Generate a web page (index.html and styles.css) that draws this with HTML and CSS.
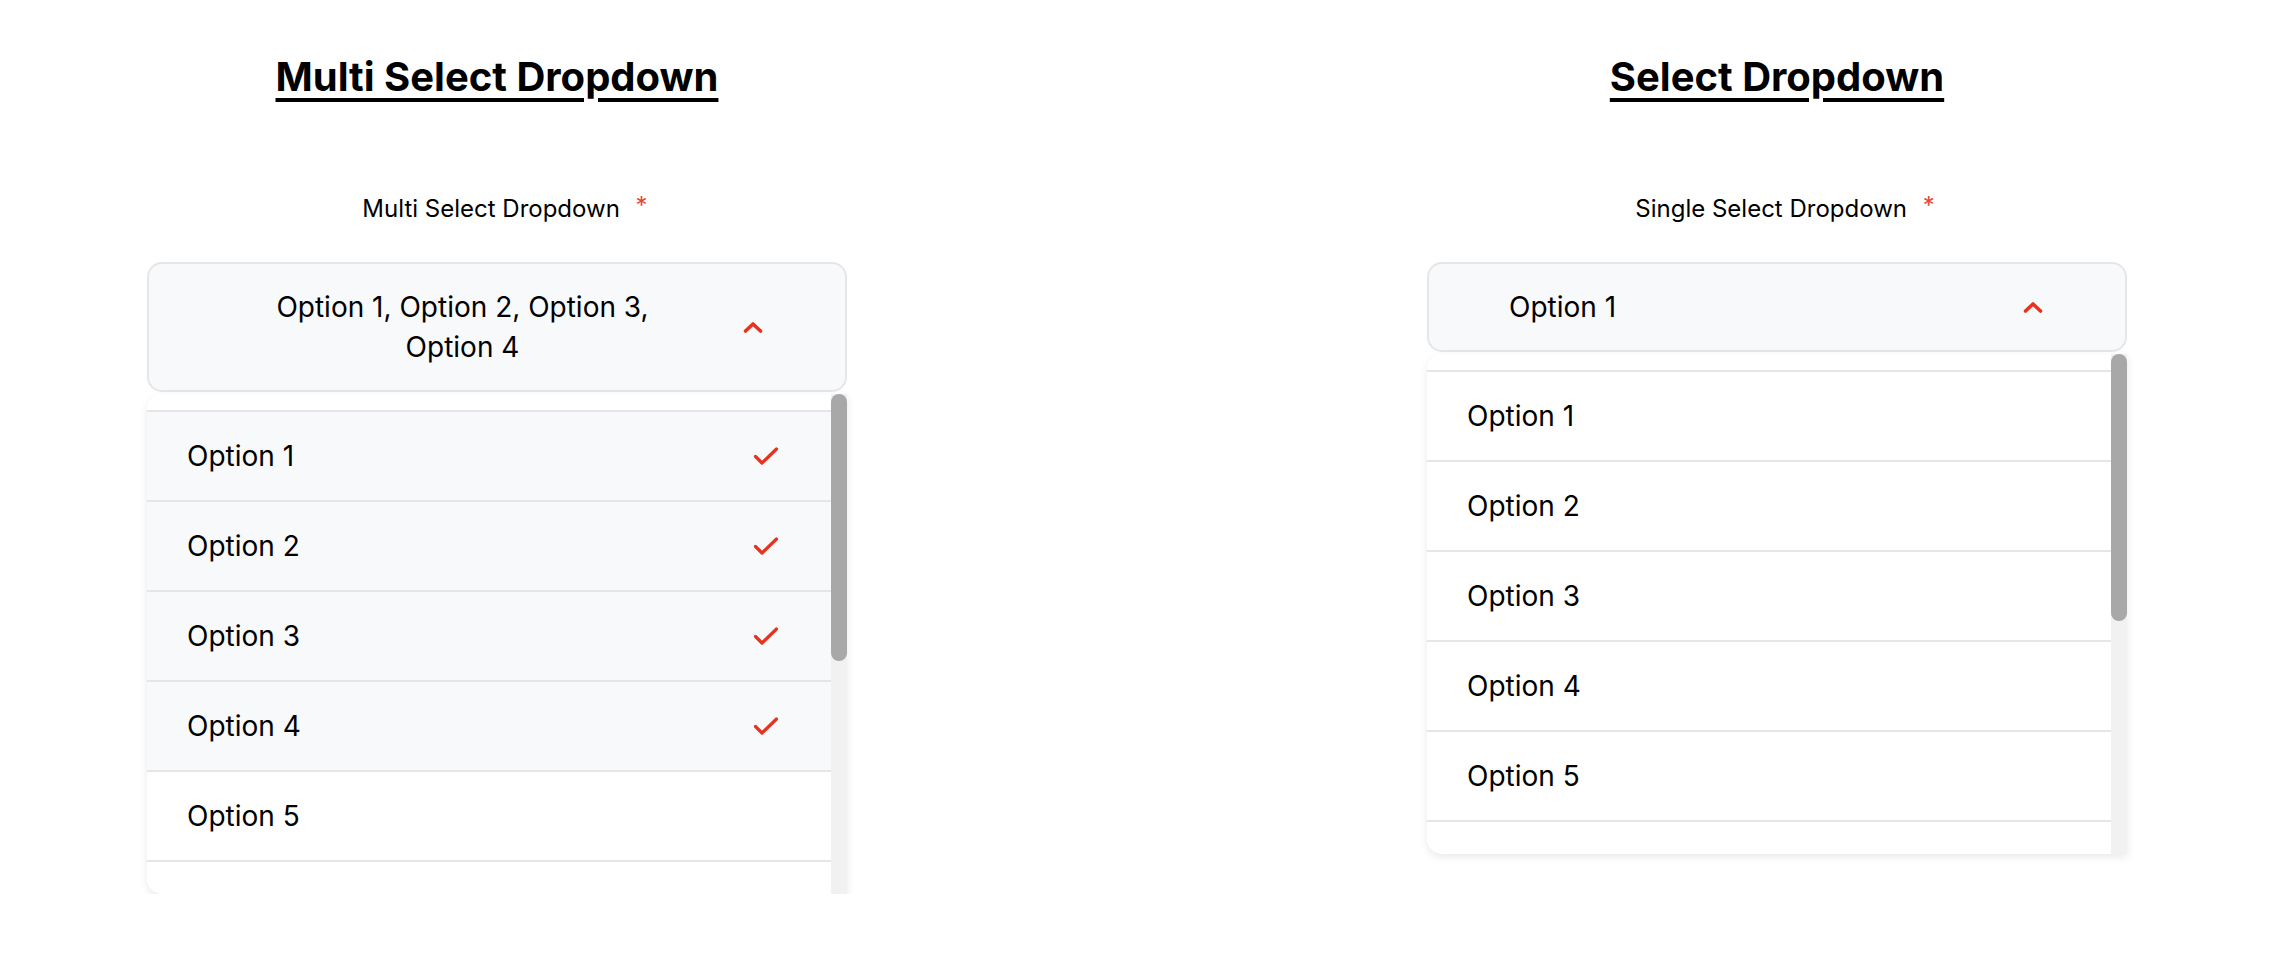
FILE: index.html
```html
<!DOCTYPE html>
<html lang="en">
<head>
<meta charset="utf-8">
<title>Dropdowns</title>
<link rel="stylesheet" href="styles.css">
</head>
<body>
<main class="page">
  <section class="column">
    <h1 class="title">Multi Select Dropdown</h1>
    <div class="label">Multi Select Dropdown <span class="req">*</span></div>
    <div class="field">
      <div class="control">
        <div class="value value-multi">Option 1, Option 2, Option 3, Option 4</div>
        <svg class="chevron" viewBox="0 0 20 12" width="20" height="12"><path d="M2.5 10 L10 3 L17.5 10" fill="none" stroke="#e8321f" stroke-width="3.6" stroke-linecap="round" stroke-linejoin="round"/></svg>
      </div>
      <div class="list">
        <ul class="options">
          <li class="opt selected">Option 1<svg class="check" viewBox="0 0 26 20" width="26" height="20"><path d="M2.5 10.5 L9 17 L23.5 3" fill="none" stroke="#e8321f" stroke-width="3.2" stroke-linecap="round" stroke-linejoin="round"/></svg></li>
          <li class="opt selected">Option 2<svg class="check" viewBox="0 0 26 20" width="26" height="20"><path d="M2.5 10.5 L9 17 L23.5 3" fill="none" stroke="#e8321f" stroke-width="3.2" stroke-linecap="round" stroke-linejoin="round"/></svg></li>
          <li class="opt selected">Option 3<svg class="check" viewBox="0 0 26 20" width="26" height="20"><path d="M2.5 10.5 L9 17 L23.5 3" fill="none" stroke="#e8321f" stroke-width="3.2" stroke-linecap="round" stroke-linejoin="round"/></svg></li>
          <li class="opt selected">Option 4<svg class="check" viewBox="0 0 26 20" width="26" height="20"><path d="M2.5 10.5 L9 17 L23.5 3" fill="none" stroke="#e8321f" stroke-width="3.2" stroke-linecap="round" stroke-linejoin="round"/></svg></li>
          <li class="opt">Option 5</li>
          <li class="opt opt-empty"></li>
        </ul>
        <div class="scrollbar"><div class="thumb"></div></div>
      </div>
    </div>
  </section>
  <section class="column">
    <h1 class="title">Select Dropdown</h1>
    <div class="label">Single Select Dropdown <span class="req">*</span></div>
    <div class="field">
      <div class="control">
        <div class="value value-single">Option 1</div>
        <svg class="chevron" viewBox="0 0 20 12" width="20" height="12"><path d="M2.5 10 L10 3 L17.5 10" fill="none" stroke="#e8321f" stroke-width="3.6" stroke-linecap="round" stroke-linejoin="round"/></svg>
      </div>
      <div class="list">
        <ul class="options">
          <li class="opt">Option 1</li>
          <li class="opt">Option 2</li>
          <li class="opt">Option 3</li>
          <li class="opt">Option 4</li>
          <li class="opt">Option 5</li>
          <li class="opt opt-empty"></li>
        </ul>
        <div class="scrollbar"><div class="thumb"></div></div>
      </div>
    </div>
  </section>
</main>
</body>
</html>
```
FILE: styles.css
```css
* { box-sizing: border-box; }
html, body { margin: 0; padding: 0; background: #fff; }
body { font-family: Inter, "Noto Sans", "Liberation Sans", sans-serif; color: #000; }

.page {
  display: flex;
  align-items: flex-start;
  gap: 580px;
  padding: 53px 0 0 147px;
}

.column {
  width: 700px;
  display: flex;
  flex-direction: column;
  align-items: center;
}

.title {
  margin: 0;
  font-size: 40px;
  line-height: 48px;
  font-weight: 700;
  text-decoration: underline;
  text-decoration-thickness: 4px;
  text-underline-offset: 7px;
}

.label {
  margin-top: 93px;
  font-size: 24px;
  line-height: 29px;
  padding-left: 16px;
}
.req {
  color: #e5483b;
  margin-left: 9px;
  position: relative;
  top: -3px;
}

.field {
  margin-top: 39px;
  width: 700px;
}

.control {
  display: flex;
  align-items: center;
  background: #f8f9fb;
  border: 2px solid #e5e6ea;
  border-radius: 15px;
  padding: 23px 82px 23px 80px;
  font-size: 28px;
  line-height: 40px;
}
.value { flex: 1; }
.value-multi { text-align: center; margin-right: 47px; }
.value-single { text-align: left; }
.chevron { flex: none; display: block; width: 20px; height: 12px; }

.list {
  display: flex;
  height: 500px;
  margin-top: 2px;
  overflow: hidden;
  background: #fff;
  border-radius: 15px 0 0 15px;
  box-shadow: 0 3px 8px rgba(0, 0, 0, 0.09);
}

.options {
  flex: 1;
  list-style: none;
  margin: 0;
  padding: 16px 0 0;
  overflow: hidden;
  font-size: 28px;
  line-height: 40px;
}

.scrollbar {
  flex: none;
  width: 16px;
  background: #f1f1f1;
}
.thumb {
  height: 267px;
  background: #a8a8a8;
  border-radius: 8px;
}

.opt {
  display: flex;
  align-items: center;
  justify-content: space-between;
  height: 90px;
  border-top: 2px solid #e5e6ea;
  padding: 0 52px 0 40px;
}
.opt.selected { background: #f8f9fb; }
.check { flex: none; display: block; width: 26px; height: 20px; }
```
